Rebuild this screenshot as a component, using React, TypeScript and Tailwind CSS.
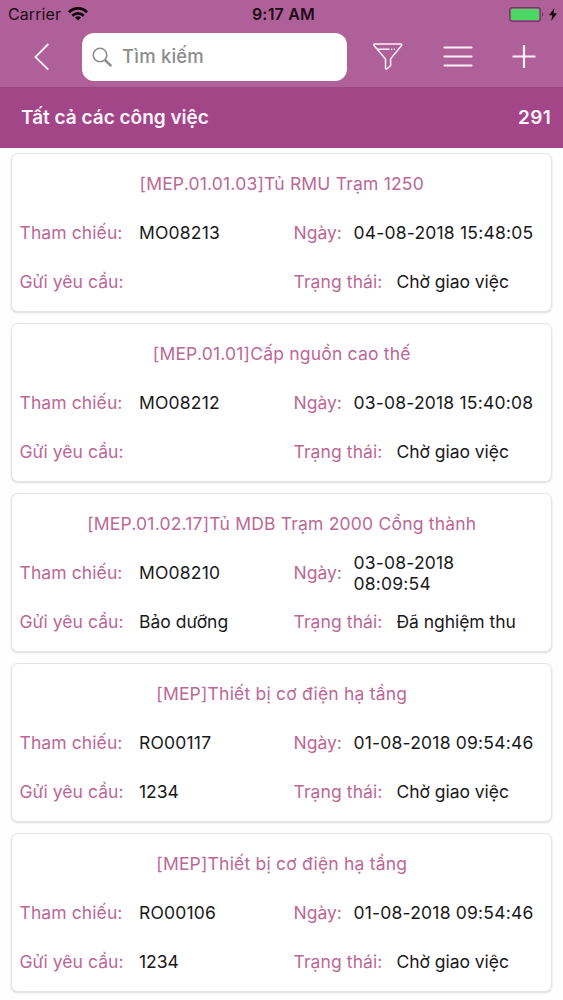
import { useState } from 'react';

type Task = {
  title: string;
  code: string;
  date: string;
  request: string;
  status: string;
};

const tasks: Task[] = [
  { title: '[MEP.01.01.03]Tủ RMU Trạm 1250', code: 'MO08213', date: '04-08-2018 15:48:05', request: '', status: 'Chờ giao việc' },
  { title: '[MEP.01.01]Cấp nguồn cao thế', code: 'MO08212', date: '03-08-2018 15:40:08', request: '', status: 'Chờ giao việc' },
  { title: '[MEP.01.02.17]Tủ MDB Trạm 2000 Cổng thành', code: 'MO08210', date: '03-08-2018 08:09:54', request: 'Bảo dưỡng', status: 'Đã nghiệm thu' },
  { title: '[MEP]Thiết bị cơ điện hạ tầng', code: 'RO00117', date: '01-08-2018 09:54:46', request: '1234', status: 'Chờ giao việc' },
  { title: '[MEP]Thiết bị cơ điện hạ tầng', code: 'RO00106', date: '01-08-2018 09:54:46', request: '1234', status: 'Chờ giao việc' },
];

function StatusBar() {
  return (
    <div className="grid h-[29px] grid-cols-[1fr_auto_1fr] items-center pb-px pl-[8px] pr-[6px] text-[16px] text-[#1d0c18]">
      <div className="flex items-center gap-[7px]">
        <span className="tracking-[0.1px]">Carrier</span>
        <svg width="20" height="14" viewBox="0 0 20 14" fill="none" stroke="#14060f" strokeWidth="2.7">
          <path d="M1 5.2a12.7 12.7 0 0 1 18 0" />
          <path d="M4.3 8.7a8 8 0 0 1 11.4 0" />
          <path d="M10 13.6 6.9 10.5a4.4 4.4 0 0 1 6.2 0z" fill="#14060f" stroke="none" />
        </svg>
      </div>
      <span className="pl-[2px] text-[16px] font-semibold tracking-[0.2px]">9:17 AM</span>
      <div className="flex items-center justify-end gap-[5px]">
        <svg width="35" height="15" viewBox="0 0 35 15">
          <rect x="0.7" y="0.7" width="30.6" height="13.6" rx="2.5" fill="none" stroke="#713b60" strokeWidth="1.3" />
          <rect x="2" y="2" width="28" height="11" rx="1" fill="#4bd763" />
          <path d="M33 5v5c2-1 2-4 0-5z" fill="#713b60" />
        </svg>
        <svg width="8" height="13" viewBox="0 0 8 13" fill="#14060f">
          <path d="M5.4 0 0 7.3h3.3L2.3 13 8 5.3H4.5z" />
        </svg>
      </div>
    </div>
  );
}

function NavBar() {
  const [query, setQuery] = useState('');

  return (
    <div className="flex h-[58px] items-start pt-[4px] text-[#fff0fb]">
      <button className="ml-[34px] mt-[10px] h-[28px] w-[16px]">
        <svg width="16" height="28" viewBox="0 0 16 28" fill="none" stroke="currentColor" strokeWidth="1.8">
          <path d="M14.3 1 1.4 14l12.9 12.6" />
        </svg>
      </button>
      <label className="ml-[32px] flex h-[48px] w-[265px] items-center rounded-[12px] bg-white pl-[10px]">
        <svg width="21" height="21" viewBox="0 0 21 21" fill="none" stroke="#8c8c8e">
          <circle cx="8" cy="8" r="6.8" strokeWidth="1.6" />
          <path d="m13 13 6.3 6.2" strokeWidth="2.5" />
        </svg>
        <input
          value={query}
          onChange={(e) => setQuery(e.target.value)}
          placeholder="Tìm kiếm"
          className="ml-[9px] w-[200px] text-[18.5px] font-medium tracking-[0.2px] text-black outline-none placeholder:text-[#8c8c8c]"
        />
      </label>
      <button className="ml-[26px] mt-[10px] h-[28px] w-[30px]">
        <svg width="30" height="28" viewBox="0 0 30 28" fill="none" stroke="currentColor" strokeWidth="1.5" strokeLinejoin="round">
          <path d="M1.5 1h26.4c.8 0 1.1.8.6 1.4L17.6 15.9v6.8l-3.6 3.1c-.7.5-1.5.1-1.5-.7v-9.2L1 2.4C.5 1.8.8 1 1.5 1z" />
          <path d="M4.5 6.2h12m1.5 0h1.2m1.5 0h1.2" strokeWidth="1.4" />
        </svg>
      </button>
      <button className="ml-[39.5px] mt-[12px] h-[23px] w-[30px]">
        <svg width="30" height="23" viewBox="0 0 30 23" stroke="currentColor" strokeWidth="2.2" strokeLinecap="round">
          <path d="M1.5 2.5h27M1.5 11.5h27M1.5 20.5h27" />
        </svg>
      </button>
      <button className="ml-[38.5px] mt-[11px] h-[26px] w-[26px]">
        <svg width="26" height="26" viewBox="0 0 26 26" stroke="currentColor" strokeWidth="2.2">
          <path d="M1.5 12.5h23M13 1v23" />
        </svg>
      </button>
    </div>
  );
}

function TaskCard({ title, code, date, request, status }: Task) {
  return (
    <div className="h-[159px] rounded-[7px] border border-[#e6e4e6] bg-white pl-[7.5px] pt-[5px] text-[17.5px] leading-[21px] text-[#19191b] shadow-[0_1px_2px_rgba(0,0,0,0.14)]">
      <h2 className="flex h-[49px] items-center justify-center pr-[7px] tracking-[0.2px] text-[#bb6896]">{title}</h2>
      <div className="grid grid-cols-[119.5px_154.5px_1fr]">
        <span className="flex h-[49px] items-center tracking-[0.1px] text-[#bb6896]">Tham chiếu:</span>
        <span className="flex h-[49px] items-center tracking-[0.2px]">{code}</span>
        <div className="flex h-[49px] items-center pr-[16px]">
          <span className="w-[60px] shrink-0 text-[#bb6896]">Ngày:</span>
          <span className="tracking-[0.2px]">{date}</span>
        </div>
        <span className="flex h-[49px] items-center tracking-[0.05px] text-[#bb6896]">Gửi yêu cầu:</span>
        <span className="flex h-[49px] items-center">{request}</span>
        <div className="flex h-[49px] items-center">
          <span className="w-[103px] shrink-0 tracking-[0.1px] text-[#bb6896]">Trạng thái:</span>
          <span className="tracking-[-0.05px]">{status}</span>
        </div>
      </div>
    </div>
  );
}

export default function App() {
  return (
    <div className="h-[1000px] w-[563px] overflow-hidden bg-[#fefefe] font-['Inter',sans-serif]">
      <header className="bg-[#af6098]">
        <StatusBar />
        <NavBar />
      </header>
      <div className="flex h-[61px] items-center justify-between border-t border-[#994780] bg-[#a24688] pl-[21px] pr-[12px] text-[19px] font-semibold text-[#fff4fd]">
        <span>Tất cả các công việc</span>
        <span className="tracking-[0.3px]">291</span>
      </div>
      <main className="flex flex-col gap-[11px] px-[11px] pt-[5px]">
        {tasks.map((task) => (
          <TaskCard key={task.code} {...task} />
        ))}
      </main>
    </div>
  );
}
